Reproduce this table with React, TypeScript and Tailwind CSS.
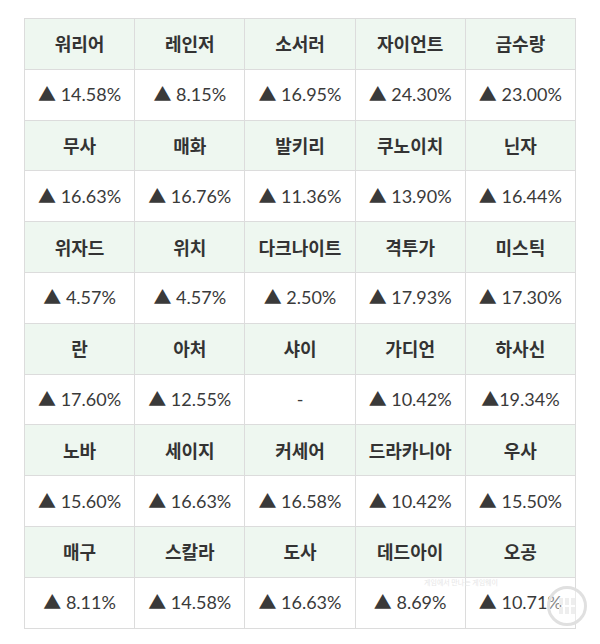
import React from "react"

type Cell = { name: string; value: string }

const rows: Cell[][] = [
  [
    { name: "워리어", value: "▲ 14.58%" },
    { name: "레인저", value: "▲ 8.15%" },
    { name: "소서러", value: "▲ 16.95%" },
    { name: "자이언트", value: "▲ 24.30%" },
    { name: "금수랑", value: "▲ 23.00%" },
  ],
  [
    { name: "무사", value: "▲ 16.63%" },
    { name: "매화", value: "▲ 16.76%" },
    { name: "발키리", value: "▲ 11.36%" },
    { name: "쿠노이치", value: "▲ 13.90%" },
    { name: "닌자", value: "▲ 16.44%" },
  ],
  [
    { name: "위자드", value: "▲ 4.57%" },
    { name: "위치", value: "▲ 4.57%" },
    { name: "다크나이트", value: "▲ 2.50%" },
    { name: "격투가", value: "▲ 17.93%" },
    { name: "미스틱", value: "▲ 17.30%" },
  ],
  [
    { name: "란", value: "▲ 17.60%" },
    { name: "아처", value: "▲ 12.55%" },
    { name: "샤이", value: "-" },
    { name: "가디언", value: "▲ 10.42%" },
    { name: "하사신", value: "▲19.34%" },
  ],
  [
    { name: "노바", value: "▲ 15.60%" },
    { name: "세이지", value: "▲ 16.63%" },
    { name: "커세어", value: "▲ 16.58%" },
    { name: "드라카니아", value: "▲ 10.42%" },
    { name: "우사", value: "▲ 15.50%" },
  ],
  [
    { name: "매구", value: "▲ 8.11%" },
    { name: "스칼라", value: "▲ 14.58%" },
    { name: "도사", value: "▲ 16.63%" },
    { name: "데드아이", value: "▲ 8.69%" },
    { name: "오공", value: "▲ 10.71%" },
  ],
]

export default function App() {
  return (
    <div className="relative w-[600px] h-[644px] bg-white pl-[24px] pt-[18px]">
      <table className="w-[552px] border-collapse table-fixed">
        <tbody>
          {rows.map((row, i) => (
            <React.Fragment key={i}>
              <tr className="h-[50.8px]">
                {row.map((c) => (
                  <td
                    key={c.name}
                    className="border border-[#dcdcdc] bg-[#eef7f0] text-center text-[18px] font-bold text-[#333] [font-family:'Noto_Sans_CJK_KR',sans-serif]"
                  >
                    {c.name}
                  </td>
                ))}
              </tr>
              <tr className="h-[50.8px]">
                {row.map((c) => (
                  <td
                    key={c.name}
                    className="border border-[#dcdcdc] bg-white text-center text-[18px] text-[#3a3a3a] [font-family:Lato,'Noto_Sans_CJK_KR',sans-serif]"
                  >
                    {c.value}
                  </td>
                ))}
              </tr>
            </React.Fragment>
          ))}
        </tbody>
      </table>
      {/* faint watermark */}
      <div className="absolute left-[547px] top-[586px] w-[40px] h-[40px] rounded-full border-[3px] border-[#e0e0e0] bg-white/40 grid grid-cols-3 gap-[2px] p-[9px]">
        <span className="bg-[#eeeeee]" />
        <span className="bg-[#eeeeee]" />
        <span className="bg-[#eeeeee]" />
        <span className="bg-[#eeeeee]" />
        <span className="bg-[#eeeeee]" />
        <span className="bg-[#eeeeee]" />
      </div>
      <div className="absolute left-[424px] top-[578px] text-[7px] leading-[8px] text-[#e6e6e6] [font-family:'Noto_Sans_CJK_KR',sans-serif]">
        게임에서 만나는 게임웨이
      </div>
    </div>
  )
}
